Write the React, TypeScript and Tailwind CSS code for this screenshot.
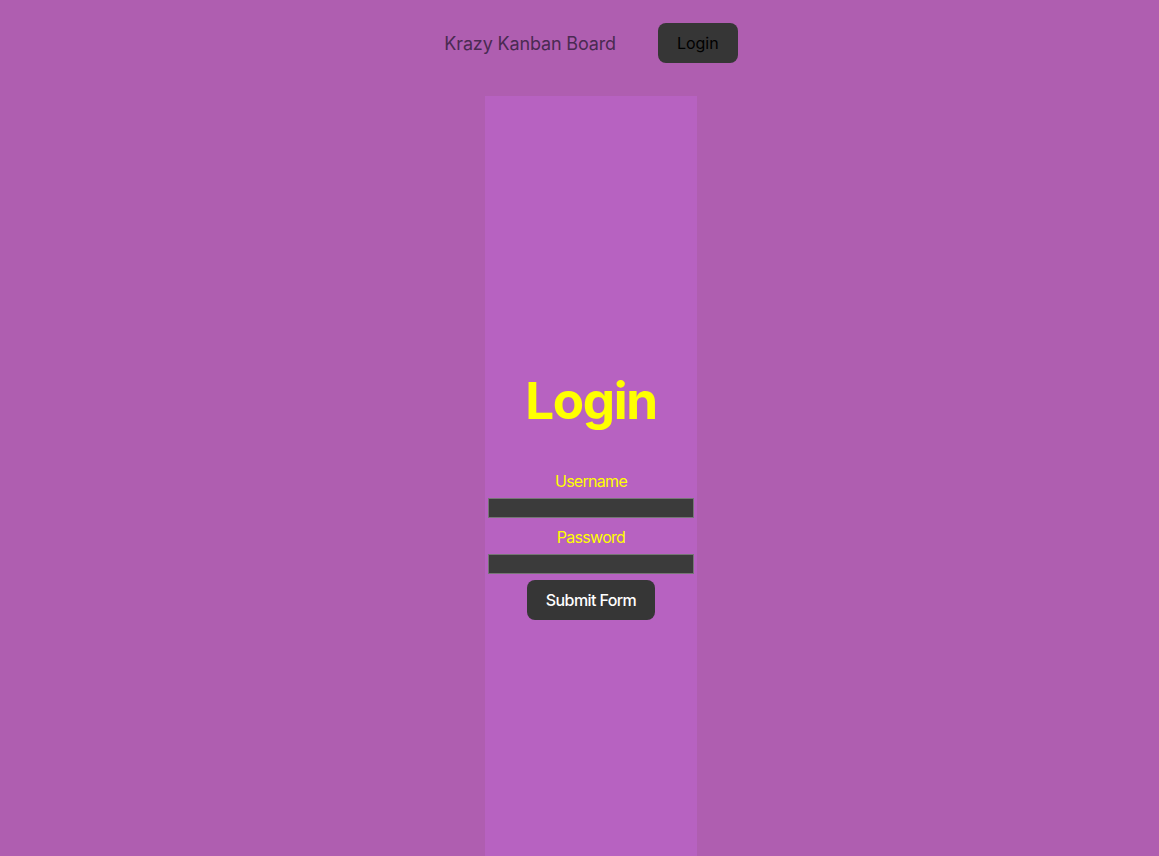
import React from "react";

export default function App() {
  return (
    <div
      className="min-h-screen w-full bg-[#af5eb0] flex flex-col items-center pl-[23px] overflow-hidden"
      style={{ fontFamily: "Inter, 'Noto Sans', sans-serif" }}
    >
      <header className="flex gap-[42px] pt-[23px] h-[96px] items-start">
        <div className="h-[40px] flex items-center text-[18px] tracking-[-0.15px] text-[#4a2a52]">Krazy Kanban Board</div>
        <button className="h-[40px] px-[19px] rounded-[8px] bg-[#363636] text-black text-[16px] font-normal">
          Login
        </button>
      </header>
      <main className="w-[212px] flex-1 min-h-[760px] bg-[#b762c1] flex flex-col items-center">
        <h1 className="mt-[276px] text-[51.2px] leading-[1.1] font-bold tracking-[-1.4px] text-[#ffff00]">Login</h1>
        <form className="mt-[41px] flex flex-col items-center w-full" onSubmit={(e) => e.preventDefault()}>
          <label className="h-[24px] leading-[24px] text-[16px] tracking-[-0.7px] text-[#ffff00]">Username</label>
          <input className="mt-[5px] w-[206px] h-[20px] bg-[#3b3b3b] border border-[#767676] outline-none" />
          <label className="mt-[7px] h-[24px] leading-[24px] text-[16px] tracking-[-0.7px] text-[#ffff00]">Password</label>
          <input type="password" className="mt-[5px] w-[206px] h-[20px] bg-[#3b3b3b] border border-[#767676] outline-none" />
          <button className="mt-[6px] h-[40px] px-[19.2px] rounded-[8px] bg-[#363636] text-white text-[16px] font-medium tracking-[-0.6px]">
            Submit Form
          </button>
        </form>
      </main>
    </div>
  );
}
